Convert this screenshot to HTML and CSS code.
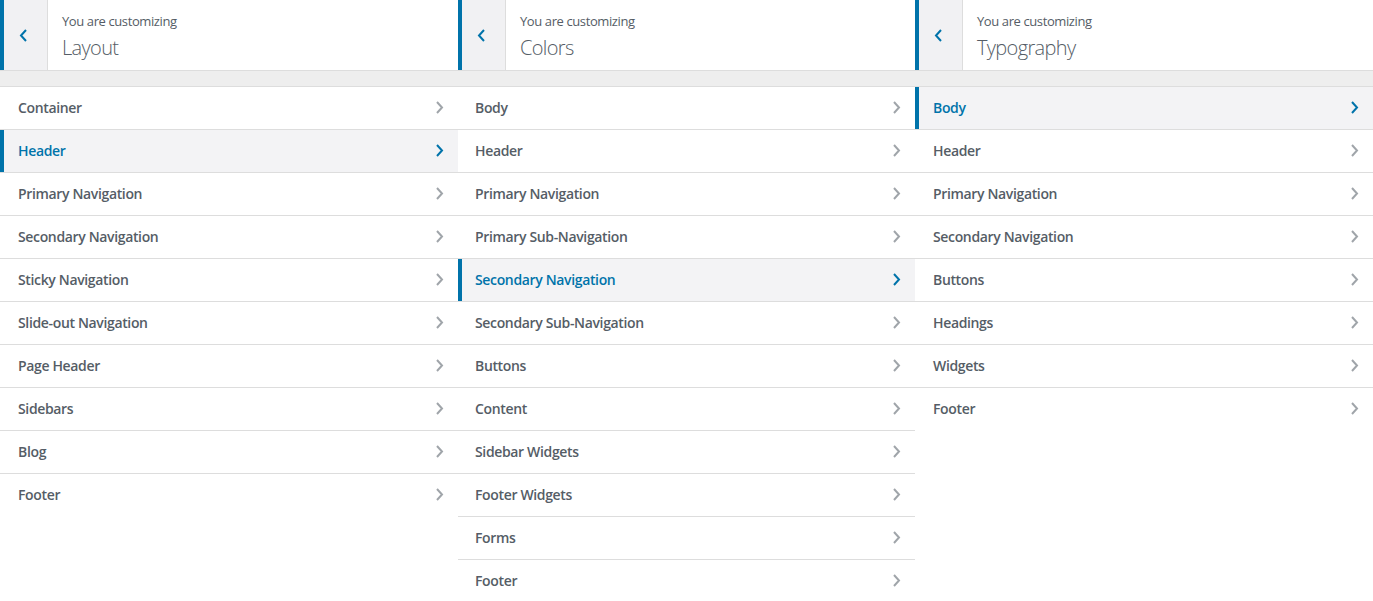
FILE: index.html
```html
<!DOCTYPE html>
<html>
<head>
<meta charset="utf-8">
<link rel="stylesheet" href="styles.css">
</head>
<body>
<div class="panels">
  <section class="panel">
    <header class="head">
      <button class="back"><svg width="9" height="13" viewBox="0 0 9 13"><path d="M7 1 L2 6.5 L7 12" fill="none" stroke="#0073aa" stroke-width="2"/></svg></button>
      <div class="title"><span class="sub">You are customizing</span><h2 class="name">Layout</h2></div>
    </header>
    <div class="band"></div>
    <ul class="list">
      <li class="row">Container<svg class="chev" width="9" height="13" viewBox="0 0 9 13"><path d="M2 1 L7 6.5 L2 12"/></svg></li>
      <li class="row active">Header<svg class="chev" width="9" height="13" viewBox="0 0 9 13"><path d="M2 1 L7 6.5 L2 12"/></svg></li>
      <li class="row">Primary Navigation<svg class="chev" width="9" height="13" viewBox="0 0 9 13"><path d="M2 1 L7 6.5 L2 12"/></svg></li>
      <li class="row">Secondary Navigation<svg class="chev" width="9" height="13" viewBox="0 0 9 13"><path d="M2 1 L7 6.5 L2 12"/></svg></li>
      <li class="row">Sticky Navigation<svg class="chev" width="9" height="13" viewBox="0 0 9 13"><path d="M2 1 L7 6.5 L2 12"/></svg></li>
      <li class="row">Slide-out Navigation<svg class="chev" width="9" height="13" viewBox="0 0 9 13"><path d="M2 1 L7 6.5 L2 12"/></svg></li>
      <li class="row">Page Header<svg class="chev" width="9" height="13" viewBox="0 0 9 13"><path d="M2 1 L7 6.5 L2 12"/></svg></li>
      <li class="row">Sidebars<svg class="chev" width="9" height="13" viewBox="0 0 9 13"><path d="M2 1 L7 6.5 L2 12"/></svg></li>
      <li class="row">Blog<svg class="chev" width="9" height="13" viewBox="0 0 9 13"><path d="M2 1 L7 6.5 L2 12"/></svg></li>
      <li class="row last">Footer<svg class="chev" width="9" height="13" viewBox="0 0 9 13"><path d="M2 1 L7 6.5 L2 12"/></svg></li>
    </ul>
  </section>
  <section class="panel">
    <header class="head">
      <button class="back"><svg width="9" height="13" viewBox="0 0 9 13"><path d="M7 1 L2 6.5 L7 12" fill="none" stroke="#0073aa" stroke-width="2"/></svg></button>
      <div class="title"><span class="sub">You are customizing</span><h2 class="name">Colors</h2></div>
    </header>
    <div class="band"></div>
    <ul class="list">
      <li class="row">Body<svg class="chev" width="9" height="13" viewBox="0 0 9 13"><path d="M2 1 L7 6.5 L2 12"/></svg></li>
      <li class="row">Header<svg class="chev" width="9" height="13" viewBox="0 0 9 13"><path d="M2 1 L7 6.5 L2 12"/></svg></li>
      <li class="row">Primary Navigation<svg class="chev" width="9" height="13" viewBox="0 0 9 13"><path d="M2 1 L7 6.5 L2 12"/></svg></li>
      <li class="row">Primary Sub-Navigation<svg class="chev" width="9" height="13" viewBox="0 0 9 13"><path d="M2 1 L7 6.5 L2 12"/></svg></li>
      <li class="row active">Secondary Navigation<svg class="chev" width="9" height="13" viewBox="0 0 9 13"><path d="M2 1 L7 6.5 L2 12"/></svg></li>
      <li class="row">Secondary Sub-Navigation<svg class="chev" width="9" height="13" viewBox="0 0 9 13"><path d="M2 1 L7 6.5 L2 12"/></svg></li>
      <li class="row">Buttons<svg class="chev" width="9" height="13" viewBox="0 0 9 13"><path d="M2 1 L7 6.5 L2 12"/></svg></li>
      <li class="row">Content<svg class="chev" width="9" height="13" viewBox="0 0 9 13"><path d="M2 1 L7 6.5 L2 12"/></svg></li>
      <li class="row">Sidebar Widgets<svg class="chev" width="9" height="13" viewBox="0 0 9 13"><path d="M2 1 L7 6.5 L2 12"/></svg></li>
      <li class="row">Footer Widgets<svg class="chev" width="9" height="13" viewBox="0 0 9 13"><path d="M2 1 L7 6.5 L2 12"/></svg></li>
      <li class="row">Forms<svg class="chev" width="9" height="13" viewBox="0 0 9 13"><path d="M2 1 L7 6.5 L2 12"/></svg></li>
      <li class="row">Footer<svg class="chev" width="9" height="13" viewBox="0 0 9 13"><path d="M2 1 L7 6.5 L2 12"/></svg></li>
    </ul>
  </section>
  <section class="panel">
    <header class="head">
      <button class="back"><svg width="9" height="13" viewBox="0 0 9 13"><path d="M7 1 L2 6.5 L7 12" fill="none" stroke="#0073aa" stroke-width="2"/></svg></button>
      <div class="title"><span class="sub">You are customizing</span><h2 class="name">Typography</h2></div>
    </header>
    <div class="band"></div>
    <ul class="list">
      <li class="row active">Body<svg class="chev" width="9" height="13" viewBox="0 0 9 13"><path d="M2 1 L7 6.5 L2 12"/></svg></li>
      <li class="row">Header<svg class="chev" width="9" height="13" viewBox="0 0 9 13"><path d="M2 1 L7 6.5 L2 12"/></svg></li>
      <li class="row">Primary Navigation<svg class="chev" width="9" height="13" viewBox="0 0 9 13"><path d="M2 1 L7 6.5 L2 12"/></svg></li>
      <li class="row">Secondary Navigation<svg class="chev" width="9" height="13" viewBox="0 0 9 13"><path d="M2 1 L7 6.5 L2 12"/></svg></li>
      <li class="row">Buttons<svg class="chev" width="9" height="13" viewBox="0 0 9 13"><path d="M2 1 L7 6.5 L2 12"/></svg></li>
      <li class="row">Headings<svg class="chev" width="9" height="13" viewBox="0 0 9 13"><path d="M2 1 L7 6.5 L2 12"/></svg></li>
      <li class="row">Widgets<svg class="chev" width="9" height="13" viewBox="0 0 9 13"><path d="M2 1 L7 6.5 L2 12"/></svg></li>
      <li class="row last">Footer<svg class="chev" width="9" height="13" viewBox="0 0 9 13"><path d="M2 1 L7 6.5 L2 12"/></svg></li>
    </ul>
  </section>
</div>
</body>
</html>
```
FILE: styles.css
```css
html, body {
  margin: 0;
  padding: 0;
  background: #fff;
  overflow: hidden;
}
body {
  font-family: "Open Sans", "Noto Sans", sans-serif;
  color: #555d66;
}
.panels {
  display: grid;
  grid-template-columns: 458px 457px 458px;
  height: 601px;
  overflow: hidden;
}
.panel {
  display: flex;
  flex-direction: column;
  min-width: 0;
}
.head {
  display: flex;
  height: 70px;
  border-bottom: 1px solid #dddddd;
  background: #fff;
}
.back {
  width: 48px;
  height: 70px;
  flex: none;
  margin: 0;
  padding: 0 4px 0 0;
  border: 0;
  border-left: 4px solid #0073aa;
  border-right: 1px solid #dddddd;
  background: #f1f1f3;
  display: flex;
  align-items: center;
  justify-content: center;
}
.back svg {
  display: block;
}
.title {
  padding: 11px 0 0 14px;
  display: flex;
  flex-direction: column;
}
.sub {
  font-size: 13px;
  line-height: 20px;
  letter-spacing: -0.4px;
  color: #555d66;
}
.name {
  margin: 3px 0 0;
  font-size: 20px;
  font-weight: 300;
  line-height: 28px;
  letter-spacing: -0.65px;
  color: #555d66;
}
.band {
  height: 15px;
  background: #eeeeee;
  border-bottom: 1px solid #dddddd;
}
.list {
  list-style: none;
  margin: 0;
  padding: 0;
}
.row {
  box-sizing: border-box;
  height: 43px;
  border-bottom: 1px solid #dddddd;
  display: flex;
  align-items: center;
  justify-content: space-between;
  padding: 0 14px 1px 18px;
  font-size: 14px;
  font-weight: 600;
  letter-spacing: -0.35px;
  color: #555d66;
  background: #fff;
}
.panel:nth-child(2) .row {
  padding-left: 17px;
}
.row.last {
  border-bottom-color: transparent;
}
.chev {
  display: block;
  flex: none;
}
.chev path {
  fill: none;
  stroke: #a0a5aa;
  stroke-width: 2;
}
.row.active {
  background: #f3f3f5;
  color: #0073aa;
  box-shadow: inset 4px 0 0 #0073aa;
}
.row.active .chev path {
  stroke: #0073aa;
}
```
